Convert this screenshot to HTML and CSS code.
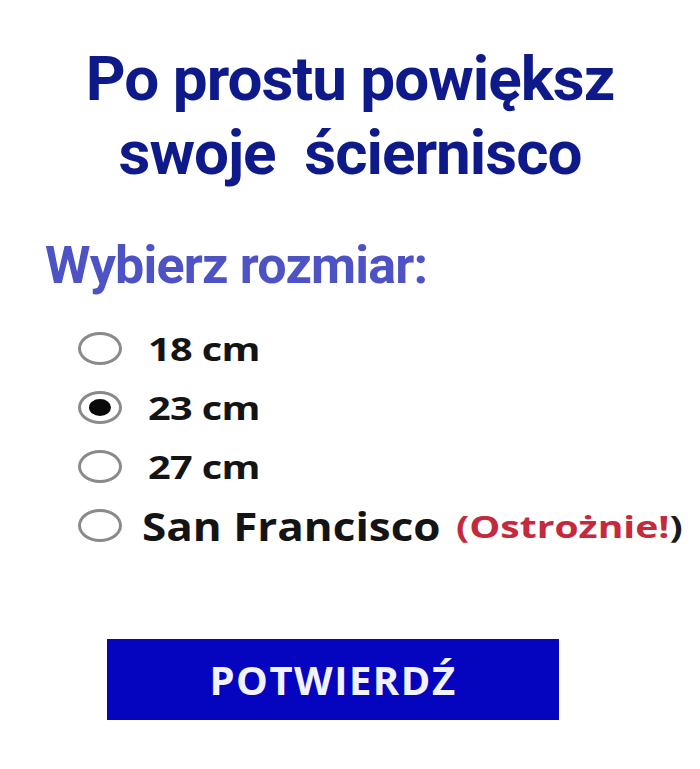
FILE: index.html
```html
<!DOCTYPE html>
<html lang="pl">
<head>
<meta charset="utf-8">
<link rel="stylesheet" href="styles.css">
</head>
<body>
<div class="page">
  <h1 class="title">Po prostu powiększ<br>swoje&nbsp; ściernisco</h1>
  <h2 class="subtitle">Wybierz rozmiar:</h2>
  <ul class="options">
    <li class="option"><span class="radio"></span><span class="label">18 cm</span></li>
    <li class="option"><span class="radio checked"></span><span class="label">23 cm</span></li>
    <li class="option"><span class="radio"></span><span class="label">27 cm</span></li>
    <li class="option sf"><span class="radio"></span><span class="label big">San Francisco</span><span class="warn">(Ostrożnie!<span class="paren">)</span></span></li>
  </ul>
  <div class="actions"><button class="confirm">POTWIERDŹ</button></div>
</div>
</body>
</html>
```

FILE: styles.css
```css
* { box-sizing: border-box; }
html, body { margin: 0; padding: 0; background: #fff; }
.page {
  width: 700px;
  height: 769px;
  overflow: hidden;
  font-family: Roboto, "Liberation Sans", sans-serif;
}
.title {
  margin: 0;
  padding-top: 42px;
  padding-left: 0;
  text-align: center;
  font-family: Roboto, sans-serif;
  font-weight: 700;
  font-size: 62px;
  line-height: 74px;
  color: #0e1a8a;
  letter-spacing: -1px;
}
.subtitle {
  margin: 0;
  padding: 48px 0 0 45px;
  font-family: Roboto, sans-serif;
  font-weight: 700;
  font-size: 52px;
  line-height: 56px;
  color: #4d53c4;
  letter-spacing: -0.8px;
}
.options {
  list-style: none;
  margin: 0;
  padding: 25px 0 0 78px;
  display: flex;
  flex-direction: column;
}
.option {
  display: flex;
  align-items: center;
  height: 59px;
}
.radio {
  width: 44px;
  height: 33px;
  border: 3px solid #8a8a8a;
  border-radius: 50%;
  flex: none;
  position: relative;
  margin-right: 26px;
}
.radio.checked::after {
  content: "";
  position: absolute;
  left: 8px;
  top: 5px;
  width: 22px;
  height: 17px;
  background: #0a0a0a;
  border-radius: 50%;
}
.label {
  display: inline-block;
  font-family: "Open Sans", sans-serif;
  font-weight: 700;
  font-size: 32px;
  color: #141414;
  letter-spacing: -0.5px;
  transform-origin: left center;
  transform: scaleX(1.24);
}
.label.big {
  font-size: 40px;
  letter-spacing: 0;
  margin-left: -6px;
  transform: scaleX(1.1);
  width: 314px;
}
.warn {
  display: inline-block;
  font-family: "Open Sans", sans-serif;
  font-weight: 700;
  font-size: 31px;
  color: #c42a3c;
  transform-origin: left center;
  transform: scaleX(1.26);
}
.paren {
  color: #1a1a1a;
}
.actions {
  padding: 84px 0 0 107px;
}
.confirm {
  width: 452px;
  height: 81px;
  border: none;
  background: #0505c0;
  color: #f2f2ff;
  font-family: "Open Sans", sans-serif;
  font-weight: 700;
  font-size: 40px;
  letter-spacing: 1.5px;
  padding: 0;
}
```
